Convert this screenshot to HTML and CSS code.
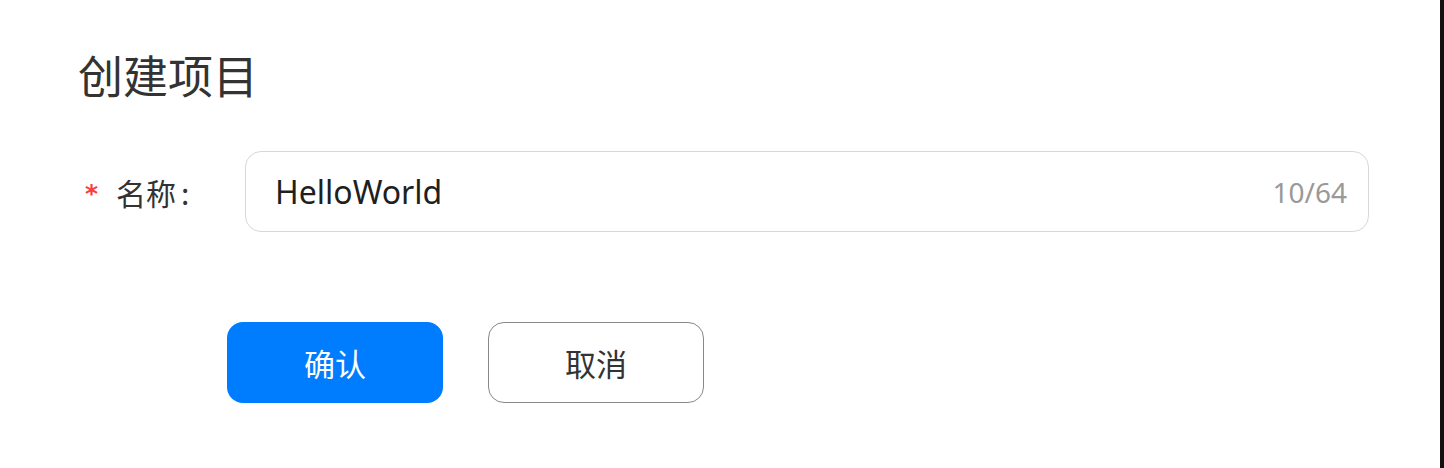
FILE: index.html
```html
<!DOCTYPE html>
<html lang="zh-CN">
<head>
<meta charset="utf-8">
<title>创建项目</title>
<link rel="stylesheet" href="styles.css">
</head>
<body>
<div class="page">
  <div class="dialog">
    <h1 class="title">创建项目</h1>
    <div class="form-row">
      <label class="label"><span class="required">*</span><span class="label-text">名称</span><span class="colon">:</span></label>
      <div class="input">
        <span class="input-value">HelloWorld</span>
        <span class="counter">10/64</span>
      </div>
    </div>
    <div class="actions">
      <button class="btn btn-primary">确认</button>
      <button class="btn btn-default">取消</button>
    </div>
  </div>
  <div class="edge"></div>
</div>
</body>
</html>
```

FILE: styles.css
```css
html, body {
  margin: 0;
  padding: 0;
  height: 100%;
}
body {
  font-family: "Noto Sans", "Noto Sans CJK SC", sans-serif;
  background: #ffffff;
}
.page {
  display: flex;
  height: 468px;
}
.dialog {
  flex: 1;
  background: #ffffff;
  padding: 45px 0 0 78px;
  box-sizing: border-box;
}
.edge {
  width: 4px;
  background: #111111;
}
.title {
  margin: 0;
  font-family: "Noto Sans CJK SC", sans-serif;
  font-size: 45px;
  font-weight: 400;
  line-height: 60px;
  color: #333333;
}
.form-row {
  display: flex;
  align-items: center;
  margin-top: 46px;
}
.label {
  width: 167px;
  display: flex;
  align-items: center;
  padding-left: 7px;
  box-sizing: border-box;
  font-family: "Noto Sans CJK SC", sans-serif;
  font-size: 30px;
  color: #333333;
}
.required {
  color: #f5413c;
  font-family: "DejaVu Sans", sans-serif;
  font-weight: bold;
  font-size: 25px;
  margin-right: 18px;
  position: relative;
  top: 2px;
}
.colon {
  margin-left: 5px;
}
.input {
  width: 1124px;
  height: 81px;
  box-sizing: border-box;
  border: 1px solid #d8d8d8;
  border-radius: 16px;
  display: flex;
  align-items: center;
  justify-content: space-between;
  padding: 0 21px 0 29px;
}
.input-value {
  font-size: 32px;
  color: #1f1f1f;
}
.counter {
  font-size: 28px;
  color: #999999;
}
.actions {
  display: flex;
  gap: 45px;
  margin: 90px 0 0 149px;
}
.btn {
  width: 216px;
  height: 81px;
  border-radius: 16px;
  font-family: "Noto Sans CJK SC", sans-serif;
  font-size: 31px;
  cursor: pointer;
  padding: 0;
}
.btn-primary {
  background: #007dff;
  color: #ffffff;
  border: none;
}
.btn-default {
  background: #ffffff;
  color: #333333;
  border: 1px solid #888888;
}
```
